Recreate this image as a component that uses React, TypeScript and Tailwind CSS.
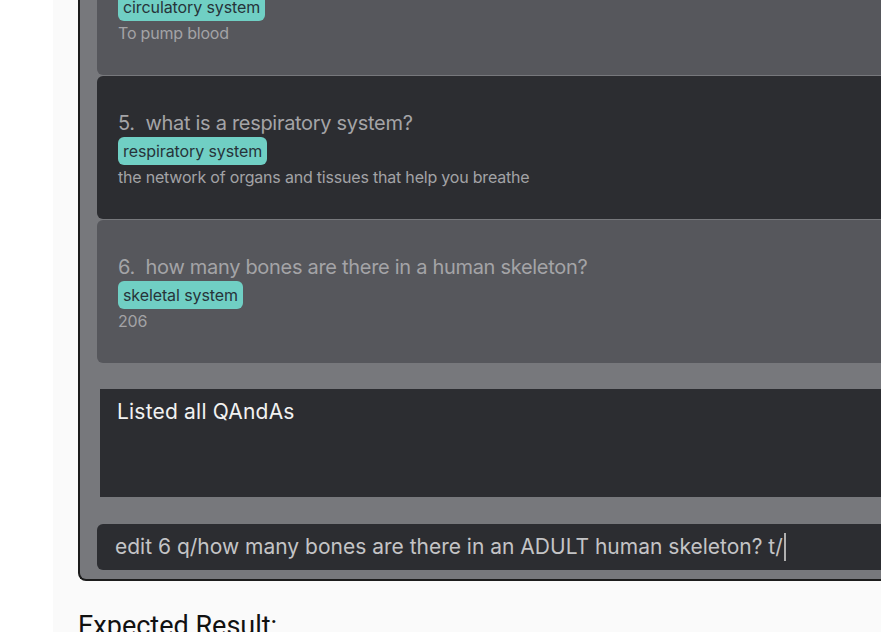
import React from "react";

function Tag({ children }: { children: React.ReactNode }) {
  return (
    <div className="flex">
      <span className="h-[28px] flex items-center px-[5px] rounded-[6px] bg-[#70cfc4] text-[#27343a] text-[16px] tracking-[-0.1px]">
        {children}
      </span>
    </div>
  );
}

function Card({
  dark,
  num,
  q,
  tag,
  a,
}: {
  dark: boolean;
  num: string;
  q: string;
  tag: string;
  a: string;
}) {
  return (
    <div
      className={
        "rounded-[6px] pl-[21px] pt-[35px] pb-[30px] " +
        (dark ? "bg-[#2c2d31]" : "bg-[#56575c]")
      }
    >
      <div className="h-[24px] flex items-center text-[20px] text-[#a4a4a7] tracking-[-0.3px] whitespace-pre">
        {num + "  " + q}
      </div>
      <div className="mt-[2px]">
        <Tag>{tag}</Tag>
      </div>
      <div className="h-[24px] flex items-center text-[16px] text-[#a3a3a6] tracking-[-0.2px]">
        {a}
      </div>
    </div>
  );
}

export default function App() {
  return (
    <div
      className="w-[881px] h-[632px] overflow-hidden flex bg-white"
      style={{ fontFamily: "Inter, 'Noto Sans', sans-serif" }}
    >
      <div className="w-[53px] shrink-0 bg-white" />
      <div className="flex-1 bg-[#fafafa] pl-[25px] overflow-hidden">
        <div className="w-[900px] h-[581px] border-l-2 border-b-2 border-[#1c1c1c] rounded-bl-[8px] bg-[#77787c] pl-[17px] flex flex-col overflow-hidden">
          <div className="flex flex-col gap-[1px]">
            <div className="rounded-b-[6px] bg-[#56575c] pl-[21px] pb-[30px] h-[75px]">
              <div className="-mt-[7px]">
                <Tag>circulatory system</Tag>
              </div>
              <div className="h-[24px] flex items-center text-[16px] text-[#a3a3a6] tracking-[-0.2px]">
                To pump blood
              </div>
            </div>
            <Card
              dark
              num="5."
              q="what is a respiratory system?"
              tag="respiratory system"
              a="the network of organs and tissues that help you breathe"
            />
            <Card
              dark={false}
              num="6."
              q="how many bones are there in a human skeleton?"
              tag="skeletal system"
              a="206"
            />
          </div>
          <div className="mt-[26px] ml-[3px] h-[108px] bg-[#2c2d31] pl-[17px] pt-[11px]">
            <div className="text-[21px] leading-[24px] text-[#f2f2f2] tracking-[0.2px]">
              Listed all QAndAs
            </div>
          </div>
          <div className="mt-[27px] h-[46px] rounded-[6px] bg-[#2c2d31] pl-[18px] flex items-center">
            <span className="text-[21px] text-[#c4c4c6] tracking-[0px] whitespace-pre">
              edit 6 q/how many bones are there in an ADULT human skeleton? t/
            </span>
            <span className="w-[2px] h-[28px] bg-[#b0b0b0] ml-[1px]" />
          </div>
        </div>
        <div
          className="mt-[29px] text-[27px] leading-[32px] text-[#111]"
          style={{ fontFamily: "Roboto, 'Noto Sans', sans-serif" }}
        >
          Expected Result:
        </div>
      </div>
    </div>
  );
}
